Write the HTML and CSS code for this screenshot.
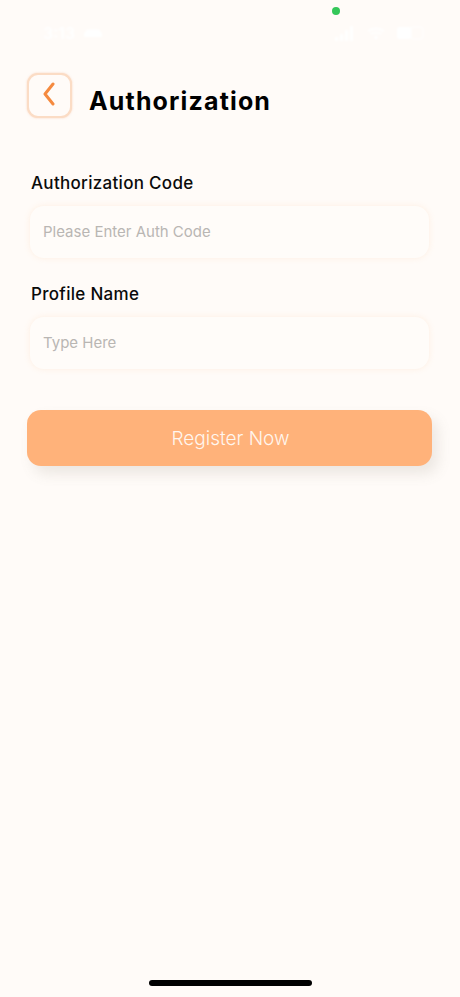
FILE: index.html
```html
<!DOCTYPE html>
<html>
<head>
<meta charset="utf-8">
<title>Authorization</title>
<link rel="stylesheet" href="styles.css">
</head>
<body>
<div class="screen">
  <span class="camera-dot"></span>
  <div class="status-bar">
    <div class="status-left">
      <span class="clock">3:13</span>
      <svg class="car" width="20" height="10" viewBox="0 0 20 10"><path d="M1 9V5.500L4 1.500h12l3 4V9z" fill="#fff"/></svg>
    </div>
    <div class="status-right">
      <svg width="20" height="15" viewBox="0 0 20 15" fill="#fff"><rect x="0" y="11" width="3" height="4"/><rect x="5" y="8" width="3" height="7"/><rect x="10" y="4" width="3" height="11"/><rect x="15" y="0" width="3" height="15"/></svg>
      <svg width="18" height="14" viewBox="0 0 20 14"><path d="M1 5c5-4 13-4 18 0M4 8.500c3.500-2.500 8.500-2.500 12 0" fill="none" stroke="#fff" stroke-width="2"/><circle cx="10" cy="12" r="2" fill="#fff"/></svg>
      <svg width="28" height="14" viewBox="0 0 28 14"><rect x="0" y="1" width="14" height="12" rx="2" fill="#fff"/><rect x="14" y="1" width="12" height="12" rx="2" fill="none" stroke="#fff"/></svg>
    </div>
  </div>

  <div class="header">
    <button class="back">
      <svg width="14" height="24" viewBox="0 0 14 24"><path d="M11 2 3 12l8 10" fill="none" stroke="#f58a3f" stroke-width="3" stroke-linecap="round" stroke-linejoin="round"/></svg>
    </button>
    <h1>Authorization</h1>
  </div>

  <form class="form">
    <label class="field-label">Authorization Code</label>
    <input class="field-input" type="text" placeholder="Please Enter Auth Code">
    <label class="field-label">Profile Name</label>
    <input class="field-input" type="text" placeholder="Type Here">
    <button class="submit" type="button">Register Now</button>
  </form>

  <div class="home-bar"></div>
</div>
</body>
</html>
```

FILE: styles.css
```css
* {
	box-sizing: border-box;
}
html, body {
	margin: 0;
	padding: 0;
}
body {
	background: #fffbf8;
	font-family: "Inter", "Liberation Sans", sans-serif;
	color: #000;
}
.screen {
	position: relative;
	width: 460px;
	height: 997px;
	display: flex;
	flex-direction: column;
	overflow: hidden;
}
.camera-dot {
	position: absolute;
	left: 332px;
	top: 7px;
	width: 8px;
	height: 8px;
	border-radius: 50%;
	background: #34c759;
}
.status-bar {
	display: flex;
	justify-content: space-between;
	align-items: center;
	height: 24px;
	margin-top: 21px;
	padding: 0 35px 0 43px;
	filter: blur(1px);
}
.status-left, .status-right {
	display: flex;
	align-items: center;
	gap: 8px;
}
.status-right {
	gap: 12px;
}
.clock {
	color: #fff;
	font-size: 16px;
	font-weight: 600;
}
.header {
	display: flex;
	align-items: center;
	gap: 17px;
	margin-top: 28px;
	padding-left: 27px;
}
.back {
	display: flex;
	align-items: center;
	justify-content: center;
	width: 45px;
	height: 45px;
	padding: 0 2px 3px 0;
	background: #fffbf8;
	border: 2px solid #fbdcc5;
	border-radius: 11px;
	box-shadow: 0 0 2px rgba(245, 170, 120, 0.5);
}
.header h1 {
	margin: 11px 0 0;
	font-size: 25px;
	font-weight: 700;
	letter-spacing: 1.150px;
}
.form {
	display: flex;
	flex-direction: column;
	margin-top: 53px;
	padding: 0 31px 0 30px;
}
.field-label {
	padding-left: 1px;
	font-size: 17px;
	line-height: 24px;
	font-weight: 500;
	letter-spacing: 0.3px;
	color: #0a0a0a;
}
.field-input {
	width: 100%;
	height: 52px;
	margin: 11px 0 24px;
	padding: 0 13px 1px;
	background: #fffcf9;
	border: 0;
	border-radius: 14px;
	box-shadow: 0 0 6px rgba(250, 190, 140, 0.2);
	font-family: inherit;
	font-size: 15px;
}
.field-input::placeholder {
	color: #b9b6b3;
}
.submit {
	width: 405px;
	height: 56px;
	margin: 17px 0 0 -3px;
	padding: 0 0 0 2px;
	background: #ffb27a;
	border: 0;
	border-radius: 14px;
	box-shadow: 6px 8px 14px rgba(120, 110, 100, 0.14);
	color: #fff6ee;
	font-family: inherit;
	font-size: 19px;
	font-weight: 300;
}
.home-bar {
	align-self: center;
	width: 163px;
	height: 6px;
	margin-top: auto;
	margin-bottom: 11px;
	background: #000;
	border-radius: 3px;
}
```
